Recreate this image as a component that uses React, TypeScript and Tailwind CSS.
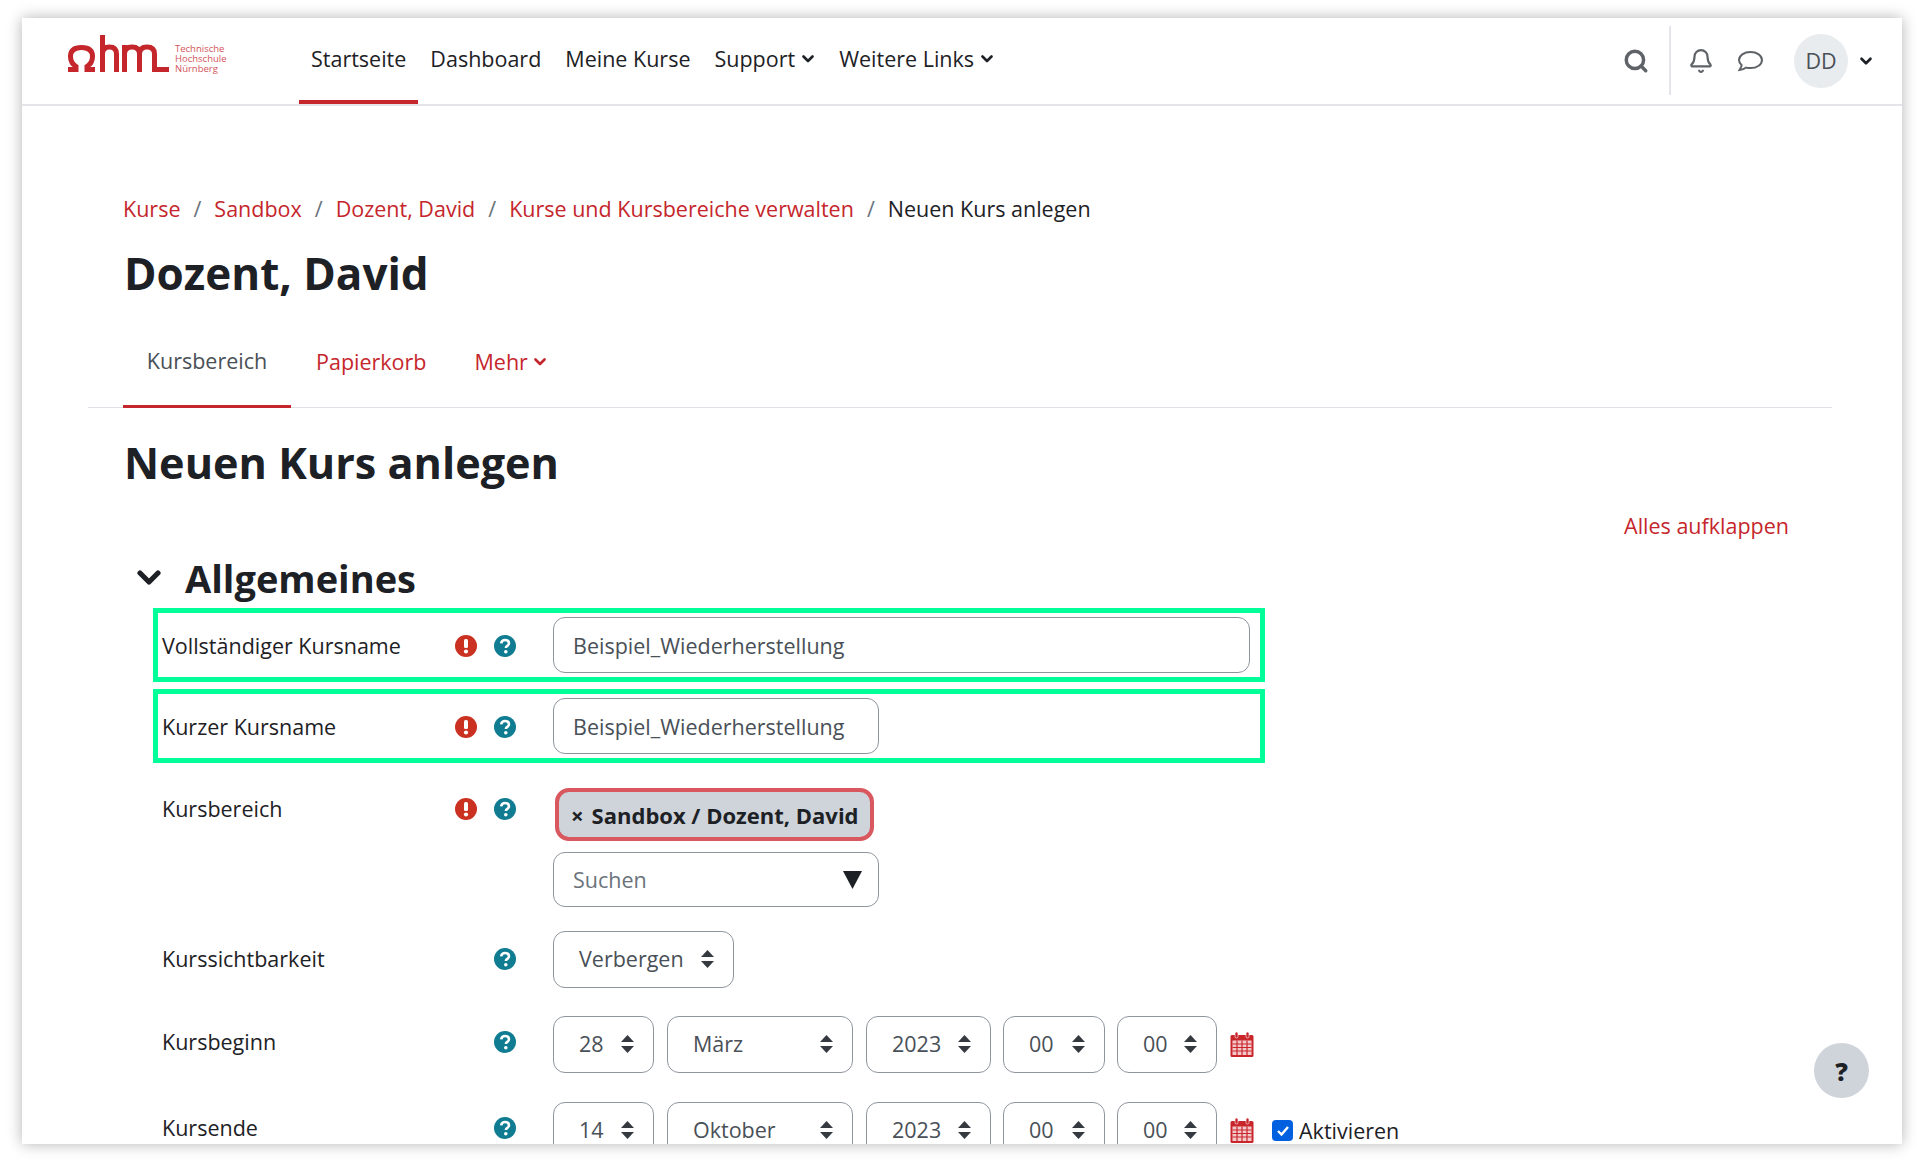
import { Search, Bell, ChevronDown } from "lucide-react";

function Chevron({ className }: { className: string }) {
  return (
    <svg viewBox="0 0 12 8" className={className} fill="none" stroke="currentColor" strokeWidth="2.6" strokeLinecap="round" strokeLinejoin="round">
      <path d="M1.5 1.5 6 6l4.5-4.5" />
    </svg>
  );
}

function Logo() {
  return (
    <div className="flex items-start gap-[6px] mb-[14px]">
      <svg viewBox="0 0 101 37" className="w-[101px] h-[37px] text-[#c5262c]" fill="none" stroke="currentColor" strokeWidth="5">
        {/* omega */}
        <path d="M0 34.500h8v-3C4 29 2.500 25.500 2.500 21.500 2.500 15 7 12.500 13.500 12.500S24.500 15 24.500 21.500c0 4-1.500 7.500-5.500 10v3h8" />
        {/* h */}
        <path d="M34.500 0v37M34.500 19c0-5 3-7 7-7s7 2 7 7v18" />
        {/* m */}
        <path d="M56.500 37V10M56.500 19c0-5 3-7 7.500-7s7.500 2 7.500 7v18M71.500 19c0-5 3-7 7.500-7s7.500 2 7.500 7v15.500H101" />
      </svg>
      <div className="flex flex-col mt-[9px] text-[9.5px] leading-[10px] text-[#d3545a]">
        <span>Technische</span>
        <span>Hochschule</span>
        <span>Nürnberg</span>
      </div>
    </div>
  );
}

function Req() {
  return (
    <svg viewBox="0 0 22 22" className="w-[22px] h-[22px] shrink-0">
      <circle cx="11" cy="11" r="11" fill="#ca3120" />
      <rect x="9" y="4" width="4" height="9" rx="1.5" fill="#fff" />
      <circle cx="11" cy="16.500" r="2.100" fill="#fff" />
    </svg>
  );
}

function Help() {
  return (
    <svg viewBox="0 0 22 22" className="w-[22px] h-[22px] shrink-0">
      <circle cx="11" cy="11" r="11" fill="#0f7c91" />
      <path d="M7.200 8.400C7.500 6 9 5 11.100 5c2.200 0 3.900 1.300 3.900 3.200 0 1.500-.9 2.200-2 2.900-.9.600-1.100.9-1.100 1.900" fill="none" stroke="#fff" strokeWidth="2.600" />
      <circle cx="11.800" cy="16.800" r="1.800" fill="#fff" />
    </svg>
  );
}

function Arrows() {
  return (
    <svg viewBox="0 0 13 18" className="w-[13px] h-[18px] shrink-0 text-[#343a40]" fill="currentColor">
      <path d="M6.500 0 13 7H0z" />
      <path d="M6.500 18 0 11h13z" />
    </svg>
  );
}

function Calendar() {
  return (
    <svg viewBox="0 0 24 25" className="w-[24px] h-[25px] shrink-0">
      <rect x="0.500" y="3" width="23" height="22" rx="1.500" fill="#c9262c" />
      <rect x="2.500" y="8.500" width="19" height="14.500" fill="#f4c9ca" />
      <path d="M2.500 12h19M2.500 15.500h19M2.500 19h19M7 8.500V23M12 8.500V23M17 8.500V23" stroke="#c9262c" strokeWidth="1.200" />
      <rect x="5" y="0" width="3" height="6" rx="1.500" fill="#c9262c" stroke="#fff" strokeWidth="0.600" />
      <rect x="16" y="0" width="3" height="6" rx="1.500" fill="#c9262c" stroke="#fff" strokeWidth="0.600" />
    </svg>
  );
}

function Sel({ label, className }: { label: string; className: string }) {
  return (
    <div className={`h-[57px] shrink-0 flex items-center justify-between pl-[25px] pr-[19px] pb-[1px] border border-[#8f959e] rounded-[12px] text-[#495057] bg-white ${className}`}>
      <span>{label}</span>
      <Arrows />
    </div>
  );
}

function DateRow({ day, month }: { day: string; month: string }) {
  return (
    <div className="flex items-center">
      <Sel label={day} className="w-[101px]" />
      <Sel label={month} className="w-[186px] ml-[13px]" />
      <Sel label="2023" className="w-[125px] ml-[13px]" />
      <Sel label="00" className="w-[102px] ml-[12px]" />
      <Sel label="00" className="w-[100px] ml-[12px]" />
      <span className="ml-[13px]">
        <Calendar />
      </span>
    </div>
  );
}

function Label({ text, req, className }: { text: string; req?: boolean; className?: string }) {
  return (
    <div className={`flex items-center w-[391px] shrink-0 ${className ?? ""}`}>
      <span className="w-[293px] text-[#1d2125]">{text}</span>
      <span className="w-[39px]">{req && <Req />}</span>
      <Help />
    </div>
  );
}

function TextRow({ wide, mt }: { wide: boolean; mt: string }) {
  return (
    <div className={`ml-[131px] w-[1112px] h-[74px] flex items-center pl-[4px] border-[5px] border-[#00ff99] ${mt}`}>
      <Label text={wide ? "Vollständiger Kursname" : "Kurzer Kursname"} req className="pt-[2px]" />
      <div className={`h-[56px] flex items-center px-[19px] pt-[2px] border border-[#8f959e] rounded-[12px] text-[#495057] ${wide ? "w-[697px]" : "w-[326px]"}`}>
        Beispiel_Wiederherstellung
      </div>
    </div>
  );
}

const crumbs = ["Kurse", "Sandbox", "Dozent, David", "Kurse und Kursbereiche verwalten"];
const nav = ["Startseite", "Dashboard", "Meine Kurse"];

export default function App() {
  return (
    <div className="w-[1924px] h-[1163px] overflow-hidden bg-white pl-[22px] pt-[18px] font-['Open_Sans',sans-serif] text-[21.5px] leading-[28px] text-[#1d2125]">
      <div className="relative w-[1880px] h-[1126px] overflow-hidden bg-white shadow-[0_0_14px_rgba(0,0,0,0.3)]">
        {/* Navbar */}
        <header className="h-[88px] flex items-center border-b-2 border-[#e3e5e8]">
          <div className="ml-[46px] w-[231px]">
            <Logo />
          </div>
          <nav className="flex h-full">
            {nav.map((n, i) => (
              <a key={n} className={`h-full flex items-center px-[12px] ${i === 0 ? "border-b-[4px] border-[#c5262c]" : "pb-[4px]"}`}>
                {n}
              </a>
            ))}
            <a className="h-full flex items-center px-[12px] pb-[4px] gap-[7px]">
              Support <Chevron className="w-[12px] h-[8px]" />
            </a>
            <a className="h-full flex items-center pl-[13px] pr-[12px] pb-[4px] gap-[7px]">
              Weitere Links <Chevron className="w-[12px] h-[8px]" />
            </a>
          </nav>
          <div className="ml-auto flex items-center h-full pb-[1px] text-[#5f6368]">
            <Search size={26} strokeWidth={3.2} className="mr-[20px]" />
            <div className="w-[2px] h-[69px] bg-[#e3e5e8]" />
            <Bell size={26} strokeWidth={2} className="ml-[17px]" />
            <svg viewBox="0 0 27 22" className="ml-[23px] w-[27px] h-[22px]" fill="none" stroke="currentColor" strokeWidth="2">
              <path d="M13.500 2C7 2 2 5.500 2 10c0 2 1 3.800 2.700 5.200C4.400 17 3.400 18.500 2.500 20c2.500-.2 5-1 6.700-2.400 1.300.3 2.800.5 4.300.5C20 18.100 25 14.500 25 10S20 2 13.500 2z" />
            </svg>
            <div className="ml-[30px] w-[54px] h-[54px] rounded-full bg-[#e9ecef] flex items-center justify-center text-[#495057]">DD</div>
            <ChevronDown size={18} strokeWidth={3.5} className="ml-[9px] mr-[27px] text-[#1d2125]" />
          </div>
        </header>

        {/* Breadcrumb */}
        <div className="mt-[89px] ml-[101px] flex items-center h-[28px]">
          {crumbs.map((c) => (
            <span key={c} className="flex items-center">
              <a className="text-[#c5262c]">{c}</a>
              <span className="mx-[13px] text-[#6a737b]">/</span>
            </span>
          ))}
          <span>Neuen Kurs anlegen</span>
        </div>
        <h1 className="mt-[25px] ml-[102px] h-[50px] flex items-center text-[44px] font-bold">Dozent, David</h1>

        {/* Tabs */}
        <div className="mt-[18px] ml-[66px] w-[1744px] h-[92px] pl-[35px] flex border-b border-[#dee2e6]">
          <a className="h-[92px] w-[168px] flex items-center justify-center border-b-[3px] border-[#c5262c] text-[#495057]">Kursbereich</a>
          <a className="h-full flex items-center pl-[25px] pr-[24px] text-[#c5262c]">Papierkorb</a>
          <a className="h-full flex items-center gap-[6px] px-[24px] text-[#c5262c]">
            Mehr <Chevron className="w-[12px] h-[8px]" />
          </a>
        </div>

        <h2 className="mt-[30px] ml-[102px] h-[50px] flex items-center text-[43.2px] font-bold">Neuen Kurs anlegen</h2>

        <div className="mt-[24px] pr-[113px] text-right text-[#c5262c]">Alles aufklappen</div>

        {/* Allgemeines */}
        <div className="mt-[13px] ml-[115px] h-[50px] flex items-center">
          <Chevron className="w-[24px] h-[16px]" />
          <h3 className="ml-[24px] text-[38px] font-bold">Allgemeines</h3>
        </div>

        <TextRow wide mt="mt-[5px]" />
        <TextRow wide={false} mt="mt-[7px]" />

        <div className="mt-[25px] ml-[131px] pl-[9px] flex items-start">
          <Label text="Kursbereich" req className="h-[42px]" />
          <div>
            <div className="ml-[2px] w-[319px] h-[53px] flex items-center pl-[12px] gap-[8px] border-[4px] border-[#d9585f] rounded-[14px] bg-[#ced4da] text-[22px] font-bold whitespace-nowrap">
              <span>×</span>
              <span>Sandbox / Dozent, David</span>
            </div>
            <div className="mt-[11px] w-[326px] h-[55px] flex items-center justify-between pl-[19px] pr-[16px] border border-[#8f959e] rounded-[12px] text-[#6a737b]">
              <span>Suchen</span>
              <svg viewBox="0 0 18 18" className="w-[19px] h-[19px] text-[#1d2125]" fill="currentColor">
                <path d="M0 1h18L9 18z" />
              </svg>
            </div>
          </div>
        </div>

        <div className="mt-[24px] ml-[131px] pl-[9px] flex items-center">
          <Label text="Kurssichtbarkeit" className="mb-[2px]" />
          <Sel label="Verbergen" className="w-[181px]" />
        </div>

        <div className="mt-[28px] ml-[131px] pl-[9px] flex items-center">
          <Label text="Kursbeginn" className="mb-[6px]" />
          <DateRow day="28" month="März" />
        </div>

        <div className="mt-[29px] ml-[131px] pl-[9px] flex items-center">
          <Label text="Kursende" className="mb-[6px]" />
          <DateRow day="14" month="Oktober" />
          <span className="ml-[18px] w-[21px] h-[21px] rounded-[4px] bg-[#0060df] flex items-center justify-center">
            <svg viewBox="0 0 16 16" className="w-[16px] h-[16px]" fill="none" stroke="#fff" strokeWidth="2.400">
              <path d="m3 8 3.500 3.500L13 4" />
            </svg>
          </span>
          <span className="ml-[6px]">Aktivieren</span>
        </div>

        {/* Hilfe */}
        <button className="absolute left-[1792px] top-[1025px] w-[55px] h-[55px] rounded-full bg-[#ced4da] text-[25px] font-extrabold text-[#1d2125]">?</button>
      </div>
    </div>
  );
}
